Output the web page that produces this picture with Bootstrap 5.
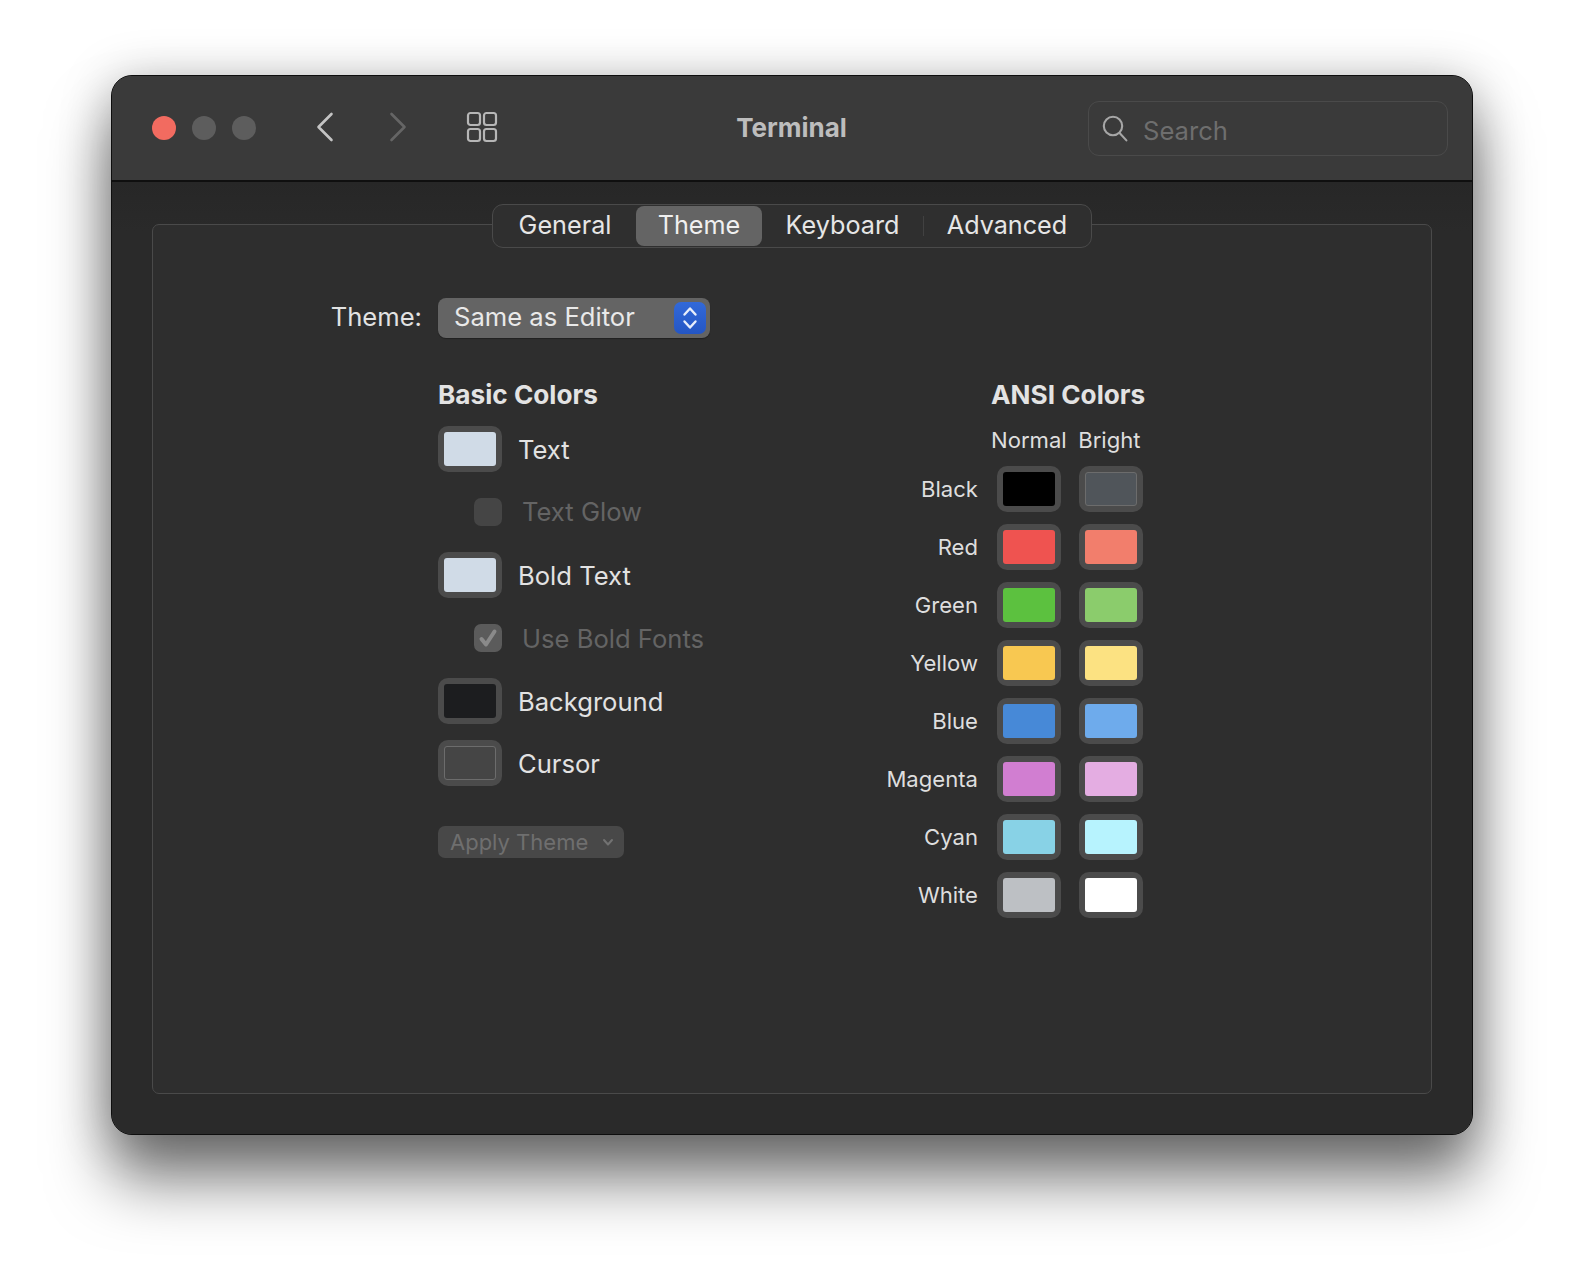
<!DOCTYPE html>
<html lang="en">
<head>
<meta charset="utf-8">
<title>Terminal</title>
<link href="https://cdn.jsdelivr.net/npm/bootstrap@5.3.0/dist/css/bootstrap.min.css" rel="stylesheet">
<style>
html,body{height:100%;}
body{background:#fff;margin:0;overflow:hidden;font-family:Inter,"Noto Sans","Liberation Sans",sans-serif;font-size:25.6px;color:#e2e2e2;}
.mac-window{width:1362px;height:1060px;margin:75px 0 0 111px;border-radius:21px;background:#2a2a2a;border:1px solid #0e0e0e;box-shadow:inset 0 0 0 1px #555,0 46px 62px rgba(0,0,0,.5),0 6px 50px rgba(0,0,0,.28);overflow:hidden;}
.title-bar{height:106px;background:#3a3a3a;border-bottom:2px solid #0f0f0f;padding:0 24px 0 40px;flex:none;}
.light{width:24px;height:24px;border-radius:50%;background:#5d5d5d;margin-right:16px;flex:none;}
.light-red{background:#f26b60;}
.tool-ico{display:block;flex:none;margin-bottom:3px;}
.ico-back{margin-left:44px;}
.ico-fwd{margin-left:55px;}
.ico-grid{margin-left:59px;}
.win-title{flex:1;text-align:center;font-weight:700;font-size:26px;color:#bdbdbd;padding-right:3px;padding-bottom:2px;}
.search-box{width:360px;height:55px;border:1px solid #4a4a4a;border-radius:11px;padding:0 13px;color:#6e6e6e;gap:15px;flex:none;}
.search-word{margin-top:7px;}
.search-ico{margin-bottom:0;}
.win-body{padding:42px 40px 40px 40px;flex:1;background:linear-gradient(#272727,#2a2a2a 50px);}
.group-panel{height:870px;border:1px solid #4a4a4a;border-radius:7px;background:#2e2e2e;}
.tab-strip{width:600px;height:44px;margin:-21px auto 0;background:#2f2f2f;border:1px solid #4a4a4a;border-radius:11px;padding:0 1px;position:relative;font-size:25.2px;}
.tab-item{height:40px;display:flex;align-items:center;justify-content:center;border-radius:8px;color:#e6e6e6;padding:0;flex:none;}
.tab-a{width:142px;}.tab-b{width:126px;background:#646464;color:#f0f0f0;}.tab-c{width:161px;}.tab-d{width:166px;}
.tab-sep{width:1px;height:20px;background:#414141;flex:none;}
.theme-row{margin-top:50px;height:40px;}
.theme-label{width:269px;text-align:right;margin-right:16px;line-height:1;padding-bottom:2px;}
.popup{width:272px;height:40px;border-radius:8px;background:#646464;padding:0 4px 0 16px;box-shadow:0 1px 1px rgba(0,0,0,.3);color:#e9e9e9;}
.popup-text{padding-bottom:2px;}
.popup-arrows{width:32px;height:32px;border-radius:7px;background:linear-gradient(#3269d9,#2456c4);}
.col-stack{margin-left:285px;margin-top:41px;}
.basic-col{width:439px;}
.head-text{font-weight:700;font-size:26.2px;line-height:32px;color:#e3e3e3;height:32px;white-space:nowrap;}
.basic-head{margin-bottom:15px;}
.color-well{width:64px;height:46px;padding:6px;border-radius:10px;background:#4b4b4b;flex:none;}
.well-fill{display:block;width:100%;height:100%;border-radius:3px;}
.well-line{border:1px solid #6c6c6c;}
.basic-row{height:46px;gap:16px;}
.basic-word{padding-top:2px;}
.row-cursor{margin-top:16px;}
.sub-row{height:28px;padding-left:36px;gap:20px;color:#646464;margin-top:26px;margin-bottom:26px;white-space:nowrap;}
.check-box{width:28px;height:28px;border-radius:7px;background:#454545;flex:none;}
.check-on{background:#5b5b5b;}
.apply-btn{width:186px;height:32px;margin-top:40px;border-radius:7px;background:#484848;color:#6f6f6f;font-size:22px;padding:0 10px 0 12px;white-space:nowrap;}
.ansi-head{margin-left:114px;}
.ansi-sub{margin-left:114px;height:37px;margin-top:10px;font-size:22.1px;color:#dedede;margin-bottom:8px;padding-top:2px;}
.sub-n{width:87.2px;}
.ansi-row{height:46px;margin-bottom:12px;font-size:22.1px;color:#dedede;}
.ansi-name{width:101px;text-align:right;margin-right:19px;padding-top:2px;}
.gap-well{margin-right:18px;}
.c-text{background:#d0dbe7;}.c-bg{background:#1c1d1f;}.c-cur{background:#454545;}
.c1{background:#000;}.c2{background:#50555a;}.c3{background:#ef5350;}.c4{background:#f27e6c;}
.c5{background:#5cc13f;}.c6{background:#8bcc6c;}.c7{background:#f8c851;}.c8{background:#fce282;}
.c9{background:#4789d7;}.c10{background:#6eabec;}.c11{background:#d17ed1;}.c12{background:#e4ade2;}
.c13{background:#88d2e6;}.c14{background:#b7f3fe;}.c15{background:#bdc0c4;}.c16{background:#fff;}
</style>
</head>
<body>
<div class="mac-window d-flex flex-column">
  <div class="title-bar d-flex align-items-center">
    <span class="light light-red"></span><span class="light"></span><span class="light"></span>
    <svg class="tool-ico ico-back" width="18" height="30" viewBox="0 0 18 30" fill="none" stroke="#c4c4c4" stroke-width="2.6" stroke-linecap="round" stroke-linejoin="round"><path d="M15.5 2 L2.5 15 L15.5 28"/></svg>
    <svg class="tool-ico ico-fwd" width="18" height="30" viewBox="0 0 18 30" fill="none" stroke="#656565" stroke-width="2.6" stroke-linecap="round" stroke-linejoin="round"><path d="M2.5 2 L15.5 15 L2.5 28"/></svg>
    <svg class="tool-ico ico-grid" width="32" height="32" viewBox="0 0 32 32" fill="none" stroke="#b6b6b6" stroke-width="2.2"><rect x="2" y="2" width="12" height="12" rx="2.5"/><rect x="18" y="2" width="12" height="12" rx="2.5"/><rect x="2" y="18" width="12" height="12" rx="2.5"/><rect x="18" y="18" width="12" height="12" rx="2.5"/></svg>
    <div class="win-title">Terminal</div>
    <div class="search-box d-flex align-items-center">
      <svg class="tool-ico search-ico" width="26" height="27" viewBox="0 0 26 27" fill="none" stroke="#a6a6a6" stroke-width="2.1" stroke-linecap="round"><circle cx="11" cy="11" r="9.2"/><path d="M17.6 18 L24.4 25.4"/></svg>
      <span class="search-word">Search</span>
    </div>
  </div>
  <div class="win-body">
    <div class="group-panel">
      <nav class="tab-strip nav d-flex align-items-center flex-nowrap">
        <span class="nav-link tab-item tab-a">General</span>
        <span class="nav-link tab-item tab-b">Theme</span>
        <span class="nav-link tab-item tab-c">Keyboard</span>
        <span class="tab-sep"></span>
        <span class="nav-link tab-item tab-d">Advanced</span>
      </nav>
      <div class="theme-row d-flex align-items-center">
        <span class="theme-label">Theme:</span>
        <div class="popup d-flex align-items-center justify-content-between">
          <span class="popup-text">Same as Editor</span>
          <span class="popup-arrows d-flex align-items-center justify-content-center">
            <svg width="18" height="26" viewBox="0 0 18 26" fill="none" stroke="#e8eefb" stroke-width="2.4" stroke-linecap="round" stroke-linejoin="round"><path d="M3.5 9.5 L9 3.5 L14.5 9.5"/><path d="M3.5 16.5 L9 22.5 L14.5 16.5"/></svg>
          </span>
        </div>
      </div>
      <div class="col-stack d-flex">
        <div class="basic-col">
          <div class="head-text basic-head">Basic Colors</div>
          <div class="basic-row d-flex align-items-center"><span class="color-well"><span class="well-fill c-text"></span></span><span class="basic-word">Text</span></div>
          <div class="sub-row d-flex align-items-center"><span class="check-box"></span><span>Text Glow</span></div>
          <div class="basic-row d-flex align-items-center"><span class="color-well"><span class="well-fill c-text"></span></span><span class="basic-word">Bold Text</span></div>
          <div class="sub-row d-flex align-items-center"><span class="check-box check-on d-flex align-items-center justify-content-center"><svg width="20" height="20" viewBox="0 0 20 20" fill="none" stroke="#8a8a8a" stroke-width="4" stroke-linecap="round" stroke-linejoin="round"><path d="M3.5 11 L8 16.5 L16.5 3.5"/></svg></span><span class="basic-word">Use Bold Fonts</span></div>
          <div class="basic-row d-flex align-items-center"><span class="color-well"><span class="well-fill c-bg"></span></span><span class="basic-word">Background</span></div>
          <div class="basic-row row-cursor d-flex align-items-center"><span class="color-well"><span class="well-fill c-cur well-line"></span></span><span class="basic-word">Cursor</span></div>
          <div class="apply-btn d-flex align-items-center justify-content-between"><span>Apply Theme</span>
            <svg width="12" height="9" viewBox="0 0 12 9" fill="none" stroke="#727272" stroke-width="2" stroke-linecap="round" stroke-linejoin="round"><path d="M2 2 L6 6.5 L10 2"/></svg>
          </div>
        </div>
        <div class="ansi-col">
          <div class="head-text ansi-head">ANSI Colors</div>
          <div class="ansi-sub d-flex align-items-center"><span class="sub-n">Normal</span><span>Bright</span></div>
          <div class="ansi-row d-flex align-items-center"><span class="ansi-name">Black</span><span class="color-well gap-well"><span class="well-fill c1"></span></span><span class="color-well"><span class="well-fill c2 well-line"></span></span></div>
          <div class="ansi-row d-flex align-items-center"><span class="ansi-name">Red</span><span class="color-well gap-well"><span class="well-fill c3"></span></span><span class="color-well"><span class="well-fill c4"></span></span></div>
          <div class="ansi-row d-flex align-items-center"><span class="ansi-name">Green</span><span class="color-well gap-well"><span class="well-fill c5"></span></span><span class="color-well"><span class="well-fill c6"></span></span></div>
          <div class="ansi-row d-flex align-items-center"><span class="ansi-name">Yellow</span><span class="color-well gap-well"><span class="well-fill c7"></span></span><span class="color-well"><span class="well-fill c8"></span></span></div>
          <div class="ansi-row d-flex align-items-center"><span class="ansi-name">Blue</span><span class="color-well gap-well"><span class="well-fill c9"></span></span><span class="color-well"><span class="well-fill c10"></span></span></div>
          <div class="ansi-row d-flex align-items-center"><span class="ansi-name">Magenta</span><span class="color-well gap-well"><span class="well-fill c11"></span></span><span class="color-well"><span class="well-fill c12"></span></span></div>
          <div class="ansi-row d-flex align-items-center"><span class="ansi-name">Cyan</span><span class="color-well gap-well"><span class="well-fill c13"></span></span><span class="color-well"><span class="well-fill c14"></span></span></div>
          <div class="ansi-row d-flex align-items-center"><span class="ansi-name">White</span><span class="color-well gap-well"><span class="well-fill c15"></span></span><span class="color-well"><span class="well-fill c16"></span></span></div>
        </div>
      </div>
    </div>
  </div>
</div>
<script src="https://cdn.jsdelivr.net/npm/bootstrap@5.3.0/dist/js/bootstrap.bundle.min.js"></script>
</body>
</html>
